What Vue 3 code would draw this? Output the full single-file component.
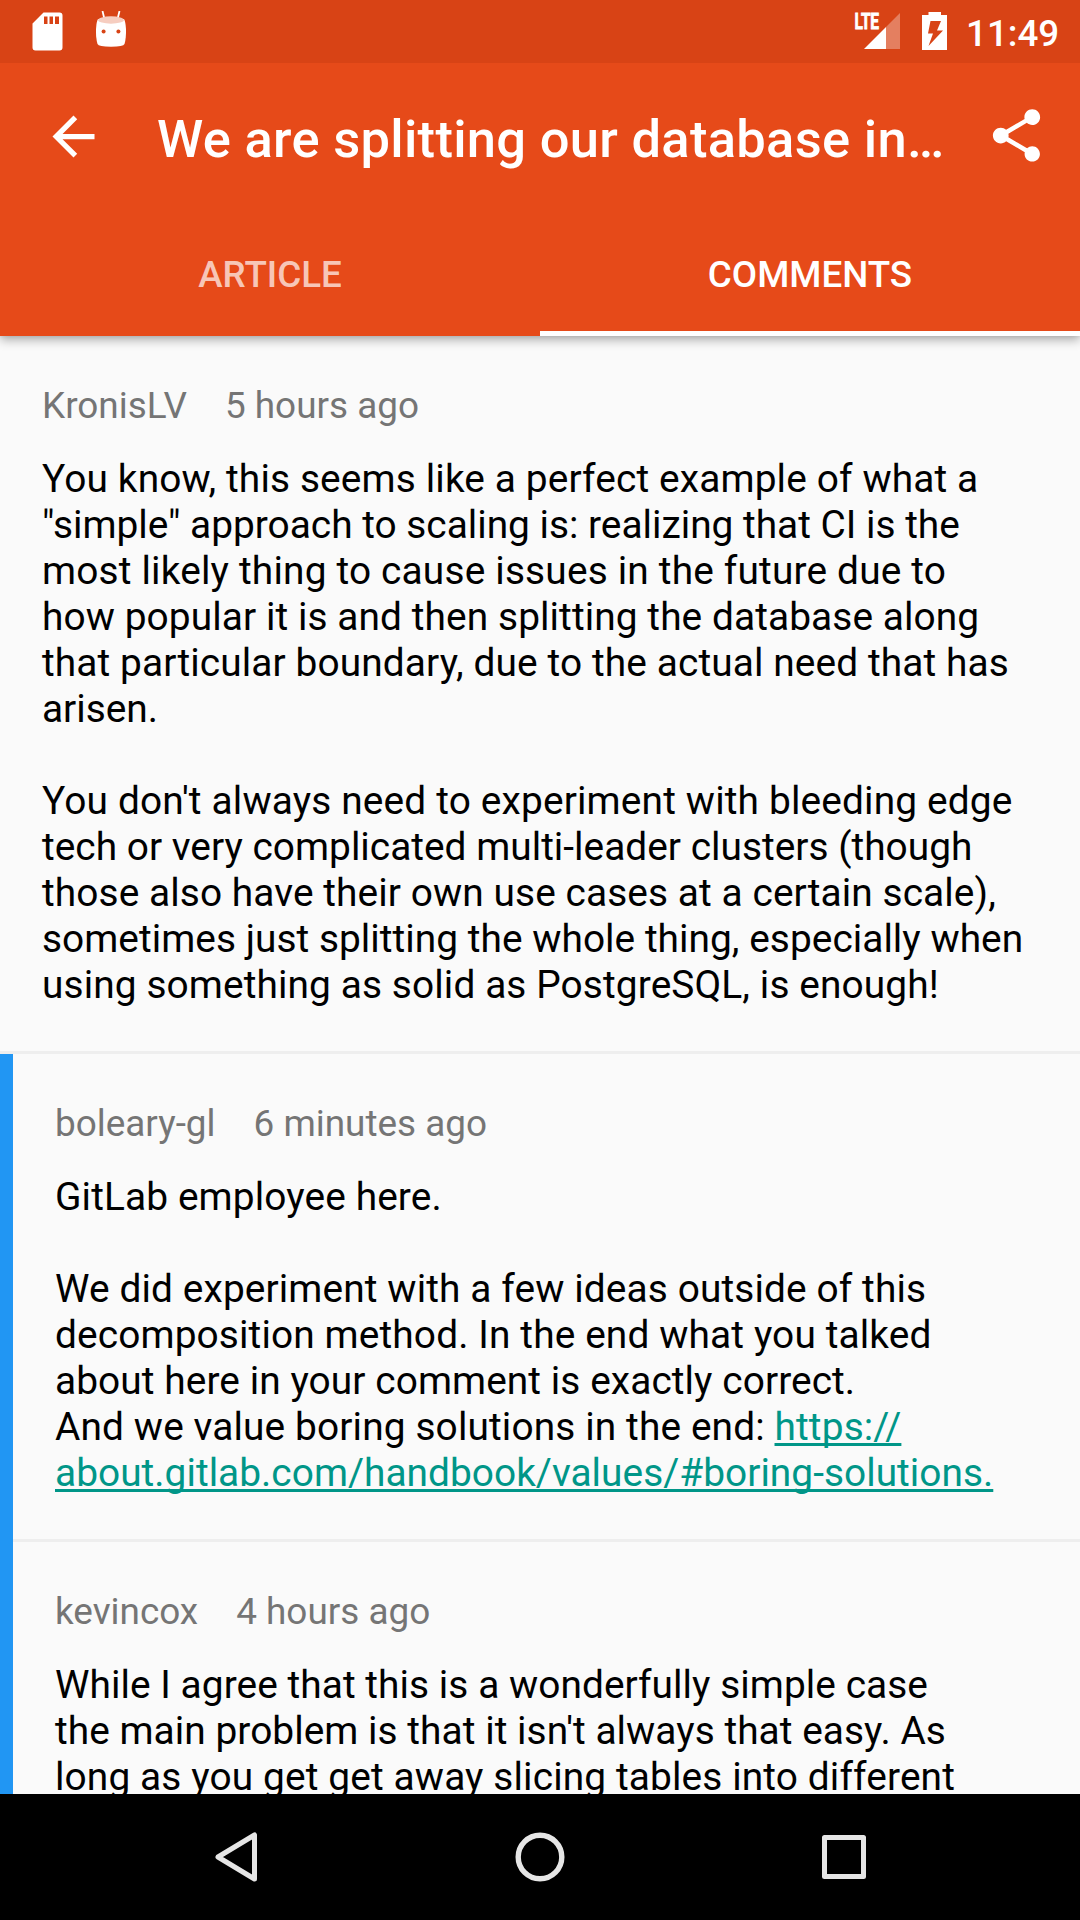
<script setup>
const line = (text, tracking, href = '') => ({ text, tracking, href })

const comments = [
  {
    author: 'KronisLV',
    age: '5 hours ago',
    reply: false,
    paragraphs: [
      [
        line('You know, this seems like a perfect example of what a', 0.14),
        line('"simple" approach to scaling is: realizing that CI is the', 0),
        line('most likely thing to cause issues in the future due to', 0.18),
        line('how popular it is and then splitting the database along', 0.09),
        line('that particular boundary, due to the actual need that has', 0.11),
        line('arisen.', 0),
      ],
      [
        line("You don't always need to experiment with bleeding edge", 0.16),
        line('tech or very complicated multi-leader clusters (though', 0.02),
        line('those also have their own use cases at a certain scale),', 0.09),
        line('sometimes just splitting the whole thing, especially when', 0.04),
        line('using something as solid as PostgreSQL, is enough!', 0.11),
      ],
    ],
  },
  {
    author: 'boleary-gl',
    age: '6 minutes ago',
    reply: true,
    paragraphs: [
      [line('GitLab employee here.', 0.12)],
      [
        line('We did experiment with a few ideas outside of this', 0.12),
        line('decomposition method. In the end what you talked', 0.13),
        line('about here in your comment is exactly correct.', 0.08),
        line('And we value boring solutions in the end: ', 0.13, 'https://'),
        line('', 0.03, 'about.gitlab.com/handbook/values/#boring-solutions.'),
      ],
    ],
  },
  {
    author: 'kevincox',
    age: '4 hours ago',
    reply: true,
    paragraphs: [
      [
        line('While I agree that this is a wonderfully simple case', 0.06),
        line("the main problem is that it isn't always that easy. As", 0.05),
        line('long as you get get away slicing tables into different', 0.13),
      ],
    ],
  },
]
</script>

<template>
  <div class="screen">
    <header class="top">
      <div class="status">
        <svg class="sd" width="31" height="39" viewBox="0 0 31 39"><path fill="#fff" fill-rule="evenodd" d="M11.5 .5H27.5Q30.5 .5 30.5 3.5V35.5Q30.5 38.5 27.5 38.5H3.5Q.5 38.5 .5 35.5V11.5ZM12 4.5V12H15.5V4.5ZM17.5 4.5V12H21V4.5ZM23 4.5V12H27V4.5Z" /></svg>
        <svg class="droid" width="32" height="38" viewBox="0 0 32 38">
          <path d="M7.5 0L9.3 7.5M24.5 0L22.7 7.5" stroke="#fff" stroke-width="1.8" />
          <path fill="#fff" d="M3 8Q1.6 10 1 18Q.7 27 2.5 33Q3.5 35.7 16 35.7T29.5 33Q31.3 27 31 18Q30.4 10 29 8Z" />
          <ellipse cx="16" cy="9" rx="13" ry="3.7" fill="#f6cdc0" />
          <circle cx="8.6" cy="20.5" r="2" fill="#d84315" />
          <circle cx="23.4" cy="20.5" r="2" fill="#d84315" />
        </svg>
        <span class="grow"></span>
        <svg class="signal" width="46" height="38" viewBox="0 0 46 38">
          <path fill="#fff" opacity=".32" d="M46 1V37H32V15Z" />
          <path fill="#fff" d="M32 15V37H10Z" />
          <text class="lte" transform="translate(.5 17) scale(.72 1)" x="0" y="0" textLength="34" lengthAdjust="spacing">LTE</text>
        </svg>
        <svg class="battery" width="25" height="38" viewBox="0 0 25 38"><path fill="#fff" fill-rule="evenodd" d="M6.5 0H19V3H25V38H0V3H6.5ZM8.5 9L6 21.5H11L6.5 34L21 18.5H15L19 9Z" /></svg>
        <span class="clock">11:49</span>
      </div>
      <div class="toolbar">
        <svg class="back" width="63" height="63" viewBox="0 0 24 24"><path fill="#fff" d="M20 11H7.83l5.59-5.59L12 4l-8 8 8 8 1.41-1.41L7.83 13H20v-2z" /></svg>
        <h1>We are splitting our database in…</h1>
        <svg class="share" width="63" height="63" viewBox="0 0 24 24"><path fill="#fff" d="M18 16.08c-.76 0-1.44.3-1.96.77L8.91 12.7c.05-.23.09-.46.09-.7s-.04-.47-.09-.7l7.05-4.11c.54.5 1.25.81 2.04.81 1.66 0 3-1.34 3-3s-1.34-3-3-3-3 1.34-3 3c0 .24.04.47.09.7L8.04 9.81C7.5 9.31 6.79 9 6 9c-1.66 0-3 1.34-3 3s1.34 3 3 3c.79 0 1.5-.31 2.04-.81l7.12 4.16c-.05.21-.08.43-.08.65 0 1.61 1.31 2.92 2.92 2.92s2.92-1.31 2.92-2.92-1.31-2.92-2.92-2.92z" /></svg>
      </div>
      <nav>
        <span class="tab">ARTICLE</span>
        <span class="tab active">COMMENTS</span>
      </nav>
    </header>

    <main>
      <article v-for="c in comments" :key="c.author" :class="{ reply: c.reply }">
        <div class="body">
          <div class="meta"><span>{{ c.author }}</span><span>{{ c.age }}</span></div>
          <p v-for="(p, i) in c.paragraphs" :key="i">
            <span v-for="(l, j) in p" :key="j" class="line" :style="{ letterSpacing: l.tracking + 'px' }">{{ l.text }}<a v-if="l.href">{{ l.href }}</a></span>
          </p>
        </div>
      </article>
    </main>

    <footer>
      <svg width="1080" height="126" viewBox="0 0 1080 126" fill="none" stroke="#e6e6e6" stroke-width="5" stroke-linejoin="round">
        <path d="M254.500 41V85L218 63Z" />
        <circle cx="540" cy="63" r="21.8" stroke-width="5.4" />
        <rect x="824.5" y="43.5" width="39" height="39" />
      </svg>
    </footer>
  </div>
</template>

<style>
body { margin: 0; }
</style>

<style scoped>
.screen { width: 1080px; height: 1920px; display: flex; flex-direction: column; overflow: hidden; background: #fafafa; font-family: Roboto, sans-serif; }
.top { height: 336px; flex: none; background: #e64a19; box-shadow: 0 4px 10px rgba(0, 0, 0, .3), 0 0 5px rgba(0, 0, 0, .1); z-index: 1; }
.status { height: 63px; box-sizing: border-box; background: #d84315; display: flex; align-items: flex-start; padding: 12px 22px 0 32px; color: #fff; }
.droid { margin: -1px 0 0 31.5px; }
.grow { flex: 1; }
.signal { overflow: visible; }
.lte { fill: #fff; stroke: #fff; stroke-width: .8px; font-size: 21.5px; font-weight: 700; }
.battery { margin: 0 19px 0 22px; }
.clock { width: 92px; text-align: right; font-size: 36.75px; line-height: 43px; font-weight: 500; }
.toolbar { height: 147px; display: flex; align-items: center; padding: 0 32px 0 42px; color: #fff; }
.share { margin-top: -2px; }
h1 { flex: 1; margin: 4px 0 0 52px; font-size: 52.5px; font-weight: 500; letter-spacing: .29px; white-space: nowrap; }
nav { display: flex; height: 126px; }
.tab { flex: 1; text-align: center; box-sizing: border-box; font-size: 36.75px; font-weight: 500; line-height: 129px; color: rgba(255, 255, 255, .7); }
.active { color: #fff; border-bottom: 5px solid #fff; }
main { flex: 1; min-height: 0; overflow: hidden; }
.reply { border-left: 13px solid #2196f3; }
.body { padding: 44px 0 43px 42px; border-bottom: 3px solid #eee; }
.meta { display: flex; gap: 38px; color: #757575; font-size: 36.9px; line-height: 52px; margin-bottom: 24px; }
p { margin: 0; font-size: 38.85px; line-height: 46px; color: #000; }
p + p { margin-top: 46px; }
.line { display: block; white-space: pre; }
a { color: #009688; text-decoration: underline; text-decoration-skip-ink: none; text-decoration-thickness: 3px; text-underline-offset: 3px; }
footer { height: 126px; flex: none; background: #000; }
footer svg { display: block; }
</style>
